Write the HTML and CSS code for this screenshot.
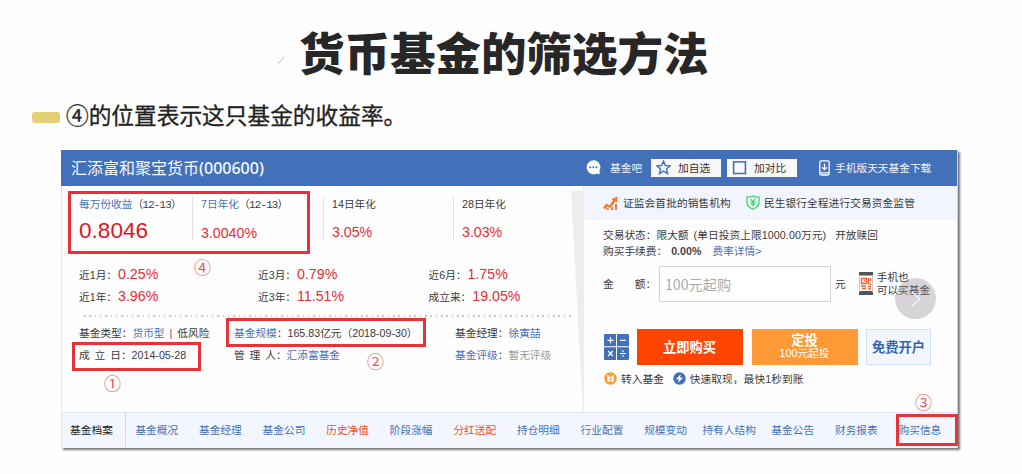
FILE: index.html
```html
<!DOCTYPE html>
<html lang="zh-CN">
<head>
    <meta charset="UTF-8">
    <meta name="viewport" content="width=device-width, initial-scale=1.0">
    <title>货币基金的筛选方法</title>
    <link rel="stylesheet" href="styles.css">
</head>
<body>
    <svg class="slash" viewBox="0 0 8 8"><path d="M.5 7.3Q5 5 7 .6" fill="none" stroke="#a9b5e0" stroke-width="1"/></svg>
    <h1>货币基金的筛选方法</h1>
    <div class="subtitle"><span class="bar"></span><p>④的位置表示这只基金的收益率。</p></div>

    <div class="card">
        <header class="header">
            <h2>汇添富和聚宝货币<span>(000600)</span></h2>
            <svg class="bubble" viewBox="0 0 15 15"><path d="M7.5.3a7 7 0 1 0 3.4 13.2l3 .7-.5-3.3A7 7 0 0 0 7.5.3z" fill="#fff"/><g fill="#4371b9"><circle cx="4.3" cy="7.3" r="1"/><circle cx="7.4" cy="7.3" r="1"/><circle cx="10.5" cy="7.3" r="1"/></g></svg>
            <a class="bar-link">基金吧</a>
            <div class="btn-small first">
                <svg viewBox="0 0 16 16"><path d="M8 1.2l2 4.7 5.1.4-3.9 3.3 1.2 5L8 11.9l-4.4 2.7 1.2-5L.9 6.3 6 5.9z" fill="none" stroke="#4371b9" stroke-width="1.5"/></svg>
                <span>加自选</span>
            </div>
            <div class="btn-small">
                <svg viewBox="0 0 16 16"><rect x="1.7" y="2" width="12.6" height="12.4" fill="none" stroke="#4371b9" stroke-width="1.7"/></svg>
                <span>加对比</span>
            </div>
            <svg class="phone-dl" viewBox="0 0 11 16"><rect x=".8" y=".8" width="9.4" height="14.2" rx="1.5" fill="none" stroke="#fff" stroke-width="1.3"/><path d="M1 12.8h9M5.5 3.5v6M3 7.2l2.5 2.5L8 7.2" fill="none" stroke="#fff" stroke-width="1.3"/></svg>
            <a>手机版天天基金下载</a>
        </header>

        <div class="main">
            <section class="left">
                <div class="rates">
                    <div class="rate"><p><a>每万份收益</a><span class="date">（12-13）</span></p><strong class="big">0.8046</strong></div>
                    <div class="rate"><p><a>7日年化</a><span class="date">（12-13）</span></p><strong>3.0040%</strong></div>
                    <div class="rate"><p>14日年化</p><strong>3.05%</strong></div>
                    <div class="rate"><p>28日年化</p><strong>3.03%</strong></div>
                </div>
                <div class="perf">
                    <p>近1月：<strong>0.25%</strong></p>
                    <p>近3月：<strong>0.79%</strong></p>
                    <p>近6月：<strong>1.75%</strong></p>
                    <p>近1年：<strong>3.96%</strong></p>
                    <p>近3年：<strong>11.51%</strong></p>
                    <p>成立来：<strong>19.05%</strong></p>
                </div>
                <div class="dots"></div>
                <div class="meta">
                    <p>基金类型：<a>货币型</a><i>|</i>低风险</p>
                    <p><a>基金规模</a>：165.83亿元（2018-09-30）</p>
                    <p>基金经理：<a>徐寅喆</a></p>
                    <p><span class="wide">成立</span>日：2014-05-28</p>
                    <p><span class="wide">管理</span>人：<a>汇添富基金</a></p>
                    <p><a>基金评级</a>：<span class="muted">暂无评级</span></p>
                </div>
                <svg class="fold" viewBox="0 0 13 221"><path d="M0 0h13v221h-1z" fill="#ededee"/></svg>
            </section>

            <section class="right">
                <div class="trust">
                    <svg class="chart" viewBox="0 0 15 14"><path d="M0 11.5l3.5-4 3 2L10 4.3 8.3 3 14.5.5l-.4 6.3-1.8-1.3-5 6.8-3-1.8L2 13.5z" fill="#f47a2c"/><path d="M3.5 11.5V14H6v-1.3zM8 12.5V14h2.3v-4zM12 8v6h2V8z" fill="#f47a2c"/></svg>
                    <span>证监会首批的销售机构</span>
                    <svg class="shield" viewBox="0 0 14 15"><path d="M7 .8Q10 2.6 13 2v5.2Q13 12 7 14.2 1 12 1 7.2V2Q4 2.6 7 .8z" fill="#e6faec" stroke="#57cf82" stroke-width="1.4"/><path d="M4.6 3.9L7 6.8l2.4-2.9M7 6.8v4.7M4.5 7.2h5M4.5 9.2h5" fill="none" stroke="#42c371" stroke-width="1.1"/></svg>
                    <span>民生银行全程进行交易资金监管</span>
                </div>
                <div class="status">
                    <p>交易状态：限大额<span class="limit">(单日投资上限1000.00万元)</span>开放赎回</p>
                    <p>购买手续费：<b>0.00%</b><a>费率详情&gt;</a></p>
                </div>
                <div class="amount">
                    <label for="money"><span>金</span><span>额：</span></label>
                    <input id="money" type="text" placeholder="100元起购">
                    <span class="unit">元</span>
                    <svg class="qr" viewBox="0 0 14 23"><path d="M0 0h14v3.5H0zM0 19h14v4H0z" fill="#555"/><path d="M.5 3v17M13.5 3v17" stroke="#c8c8c8"/><path d="M2.5 6.5h5v5h-5zM9.5 6v6.5M11.5 6v3M2 14h5M9 14.5h3M3 16.5h4M9 17h3M11.5 11v2M4.5 9h1.5" fill="none" stroke="#f0642f" stroke-width="1.4"/></svg>
                    <p>手机也<br>可以买基金</p>
                    <div class="next"><svg viewBox="0 0 41 41"><path d="M17 14l8 7-8 7" fill="none" stroke="#f4f4f5" stroke-width="1.5"/></svg></div>
                </div>
                <div class="buttons">
                    <svg class="calc" viewBox="0 0 25 26"><path d="M1 0h11v12.3H0V1q0-1 1-1zM13 0h11q1 0 1 1v11.3H13zM0 13.3h12V26H1q-1 0-1-1zM13 13.3h12V25q0 1-1 1H13z" fill="#4371b9"/><path d="M3.5 6.3h6M6.5 3.3v6M16.2 6.3h5.6M4.2 17l4.6 5M8.8 17l-4.6 5M16 19.5h6M19 16.3v1.6M19 21.1v1.6" stroke="#fff" stroke-width="1.2"/></svg>
                    <button class="buy">立即购买</button>
                    <button class="plan">定投<small>100元起投</small></button>
                    <button class="open">免费开户</button>
                </div>
                <div class="tips">
                    <svg viewBox="0 0 13 13"><circle cx="6.5" cy="6.5" r="6.2" fill="#f99b35"/><path d="M4.3 3.2l2.2 2.6 2.2-2.6h1.1v6.4H3.2V3.2z" fill="#fff"/><path d="M6.5 6v4M4.8 7.2h3.4" stroke="#f99b35" stroke-width=".7"/></svg>
                    <span>转入基金</span>
                    <svg viewBox="0 0 13 13"><circle cx="6.5" cy="6.5" r="6.2" fill="#3f70bb"/><path d="M7.6 2.3L3 7.2h2.7L5.2 10.7l4.8-5H7.2z" fill="#fff"/></svg>
                    <span>快速取现，最快1秒到账</span>
                </div>
            </section>
        </div>

        <nav class="tabs">
            <a class="current">基金档案</a>
            <a>基金概况</a>
            <a>基金经理</a>
            <a>基金公司</a>
            <a class="hot">历史净值</a>
            <a>阶段涨幅</a>
            <a class="hot">分红送配</a>
            <a>持仓明细</a>
            <a>行业配置</a>
            <a>规模变动</a>
            <a>持有人结构</a>
            <a>基金公告</a>
            <a>财务报表</a>
            <a>购买信息</a>
        </nav>

        <!-- 标注框 -->
        <div class="mark mark-rate"></div>
        <div class="mark mark-date"></div>
        <div class="mark mark-size"></div>
        <div class="mark mark-info"></div>
        <span class="num num-1">①</span>
        <span class="num num-2">②</span>
        <span class="num num-3">③</span>
        <span class="num num-4">④</span>
    </div>
</body>
</html>
```
FILE: styles.css
```css
* {
    box-sizing: border-box;
}
body {
    font-family: "Liberation Sans", "Noto Sans CJK SC", sans-serif;
    background-color: #fefefe;
    color: #3a3a3a;
    margin: 0;
    height: 474px;
    overflow: hidden;
    font-size: 10.7px;
    line-height: 16px;
    white-space: nowrap;
}
h1, h2, p {
    margin: 0;
}
svg {
    display: block;
    flex: none;
}
strong {
    font-weight: normal;
    color: #ea2b33;
    font-size: 14.2px;
}
a {
    color: #4472b8;
}
h1 {
    height: 100px;
    padding-left: 299px;
    font: 900 45.5px/102px "Noto Sans CJK SC", sans-serif;
    color: #272727;
}
.slash {
    position: absolute;
    left: 277px;
    top: 56px;
    width: 8px;
    height: 8px;
}
.subtitle {
    display: flex;
    align-items: center;
    height: 30px;
    padding-left: 32px;
    font: 22.7px/30px "Noto Sans CJK SC", sans-serif;
    color: #222;
    -webkit-text-stroke: 0.3px #222;
}
.subtitle p {
    margin-top: -1px;
}
.subtitle .bar {
    width: 28px;
    height: 11px;
    margin: 5px 6px 0 0;
    border-radius: 3px;
    background-color: #e4cf76;
}
.card {
    position: relative;
    width: 897px;
    height: 298px;
    margin: 19.5px 0 0 61px;
    background-color: #fefefe;
    border-left: 1px solid #dce8fa;
    border-right: 1px solid #bed4f2;
    box-shadow: 1.5px 1.5px 2px #777;
}

/* 顶部蓝色栏 */
.header {
    display: flex;
    align-items: center;
    height: 36px;
    padding-left: 10px;
    margin-left: -1px;
    background-color: #4371b9;
}
.header a {
    color: #eef4ff;
}
.header h2 {
    width: 515px;
    font: 16px/34px "Noto Sans CJK SC", sans-serif;
    color: #f3f7ff;
}
.header h2 span {
    font-family: "Noto Sans", sans-serif;
    font-weight: 500;
}
.bubble {
    width: 15px;
    height: 15px;
}
.header .bar-link {
    margin-left: 9px;
}
.btn-small {
    display: flex;
    align-items: center;
    width: 70px;
    height: 18px;
    margin-left: 6px;
    padding-left: 5px;
    background-color: #f8f8f8;
    color: #333;
}
.btn-small.first {
    margin-left: 9px;
}
.btn-small svg {
    width: 15px;
    height: 15px;
    margin-right: 7px;
}
.phone-dl {
    width: 11px;
    height: 16px;
    margin: 0 5px 0 22px;
}

.main {
    display: flex;
    height: 226px;
}
.left {
    position: relative;
    width: 521px;
    padding: 11px 0 0 17px;
}
.rates {
    display: grid;
    grid-template-columns: 113px 131px 130px 110px;
    height: 43px;
}
.rate {
    height: 43px;
    border-left: 1.5px solid #e2e2e2;
    padding-left: 8px;
}
.rate p {
    margin-top: -1px;
}
.rate:first-child {
    border: none;
    padding: 0;
}
.rate strong {
    display: block;
    height: 28px;
    line-height: 40px;
}
.rate .big {
    font-size: 22.6px;
    line-height: 36px;
    color: #df161e;
}
.date {
    font-family: "Liberation Mono", "Noto Sans CJK SC", monospace;
    letter-spacing: -0.7px;
}
.perf, .meta {
    display: grid;
    grid-auto-rows: 22px;
    line-height: 22px;
}
.perf {
    grid-template-columns: 179px 170.5px 1fr;
    margin-top: 24px;
}
.perf p {
    line-height: 21px;
}
.perf strong {
    margin-left: 1px;
}
.dots {
    width: 488px;
    height: 2px;
    margin: 7px 0 5px 5px;
    background: repeating-linear-gradient(90deg, #c8c8c8 0 1.5px, transparent 1.5px 5.33px);
}
.meta {
    grid-template-columns: 155px 221px 1fr;
}
.meta i {
    font-style: normal;
    color: #8d3e8c;
    margin: 0 5px;
}
.wide {
    letter-spacing: 4.9px;
}
.muted {
    color: #999;
}
.fold {
    position: absolute;
    left: 509px;
    top: 5px;
    width: 13px;
    height: 221px;
}

.right {
    width: 374px;
    border-left: 1px solid #e6ebf3;
}
.trust {
    display: flex;
    align-items: center;
    height: 34px;
    padding-left: 19px;
    background-color: #f2f5fd;
    letter-spacing: 0.1px;
}
.chart {
    width: 15px;
    height: 14px;
    margin-right: 5px;
}
.shield {
    width: 14px;
    height: 15px;
    margin: 0 4px 0 15px;
}
.status {
    padding: 7px 0 0 19px;
}
.status .limit {
    margin: 0 9px 0 5px;
    letter-spacing: 0.08px;
}
.status b {
    margin: 0 11px 0 4px;
    color: #444;
}
.amount {
    position: relative;
    display: flex;
    align-items: center;
    height: 36px;
    margin-top: 7px;
    padding-left: 19px;
}
.amount label {
    display: flex;
    gap: 21px;
    width: 56px;
}
.amount input {
    width: 172px;
    height: 36px;
    border: 1.5px solid #d3d3d3;
    padding: 0 5px;
    font: 14.2px "Noto Sans CJK SC", sans-serif;
    background: #fff;
}
.amount input::placeholder {
    color: #aaa;
}
.unit {
    margin: 0 13px 0 4px;
}
.qr {
    width: 14px;
    height: 23px;
    margin-right: 4px;
}
.amount p {
    line-height: 12.5px;
}
.next {
    position: absolute;
    left: 311px;
    top: 12px;
    width: 41px;
    height: 41px;
    border-radius: 50%;
    background-color: rgba(140, 136, 140, 0.35);
}
.buttons {
    display: flex;
    align-items: center;
    height: 36px;
    margin-top: 27px;
    padding-left: 19.5px;
}
.calc {
    width: 25px;
    height: 26px;
    margin-right: 8px;
}
button {
    height: 36px;
    padding: 0;
    border: none;
    font-family: "Liberation Sans", "Noto Sans CJK SC", sans-serif;
    font-size: 13.3px;
    font-weight: bold;
    color: #fff;
}
.buy {
    width: 106px;
    margin-right: 9px;
    background-color: #ff4400;
}
.plan {
    width: 106px;
    margin-right: 8.5px;
    background-color: #ff9936;
    line-height: 13px;
}
.plan small {
    display: block;
    font-size: 10.7px;
    font-weight: normal;
    line-height: 12px;
}
.open {
    width: 65px;
    background-color: #f2f6fe;
    border: 1px solid #cfe0f8;
    color: #3766ae;
}
.tips {
    display: flex;
    align-items: center;
    height: 28px;
    padding-left: 20px;
    letter-spacing: 0.1px;
}
.tips svg {
    width: 13px;
    height: 13px;
    margin-right: 4px;
}
.tips span {
    margin-right: 8.5px;
}

.tabs {
    display: grid;
    grid-template-columns: 64px repeat(13, 63.6px);
    height: 36px;
    border-top: 1.5px solid #dce8fa;
    background-color: #f3f6fe;
    line-height: 35px;
    text-align: center;
}
.tabs a {
    padding-right: 2px;
}
.tabs .current {
    border-right: 1px solid #d5dce8;
    color: #222;
    padding-right: 4px;
}
.tabs .hot {
    color: #f2501f;
}

.mark {
    position: absolute;
    border: 3px solid #e83237;
}
.mark-rate {
    left: 6px;
    top: 41px;
    width: 242px;
    height: 63px;
}
.mark-date {
    left: 10px;
    top: 192px;
    width: 129px;
    height: 29px;
}
.mark-size {
    left: 164px;
    top: 168px;
    width: 200px;
    height: 29px;
}
.mark-info {
    left: 834px;
    top: 264px;
    width: 62px;
    height: 32px;
}
.num {
    position: absolute;
    font: 17px/20px "Noto Sans CJK SC", serif;
    color: #ee5257;
}
.num-1 {
    left: 42px;
    top: 223px;
}
.num-2 {
    left: 305px;
    top: 201px;
}
.num-3 {
    left: 853px;
    top: 242px;
}
.num-4 {
    left: 132px;
    top: 107px;
}
```
